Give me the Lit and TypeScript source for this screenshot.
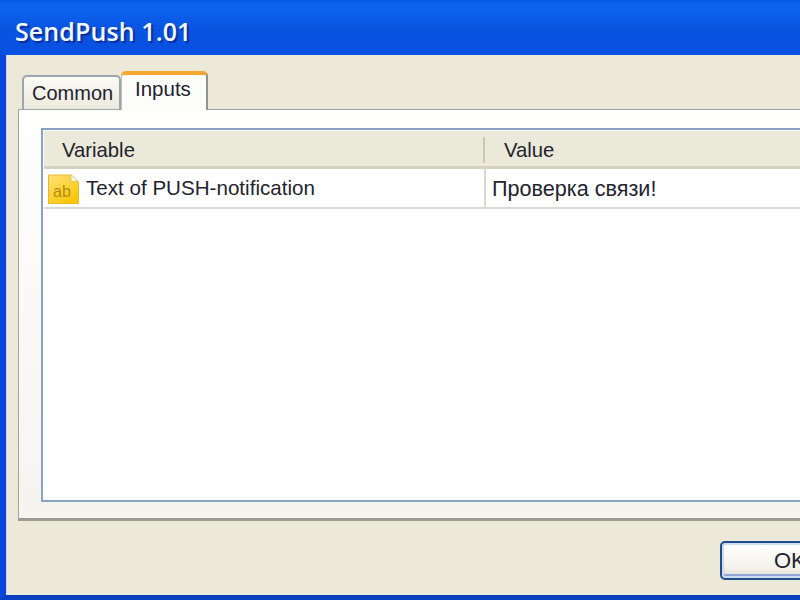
import { LitElement, html, css } from "lit";
import { customElement } from "lit/decorators.js";

@customElement("app-root")
export class AppRoot extends LitElement {
  static styles = css`
    :host { display: block; width: 800px; height: 600px; overflow: hidden; font-family: "Liberation Sans", Arial, sans-serif; color: #23232e; }
    .window { width: 900px; height: 600px; display: flex; flex-direction: column; box-sizing: border-box;
      background: #0b50dc; border-left: 6px solid #0a46d8; border-bottom: 5px solid #0a3fc0; border-top-left-radius: 10px; }
    .title { height: 55px; flex: none; box-sizing: border-box; margin-left: -6px; padding: 13px 0 0 15px; font-size: 25px; line-height: 36px; font-family: "Open Sans", sans-serif; font-weight: 600; color: #f4f8ff; letter-spacing: 0.1px;
      text-shadow: 2px 2px 1px #0a2f9c; background: linear-gradient(#0a5ae6 0, #0c66f0 12%, #0a54e2 50%, #0750e0 100%); }
    .body { flex: 1; background: #ece9d8; border-left: 1px solid #c9d4ec; box-sizing: border-box; padding: 15px 0 0 11px; display: flex; flex-direction: column; }
    .tabs { display: flex; align-items: flex-end; height: 39px; flex: none; padding-left: 4px; position: relative; z-index: 1; }
    .tab { box-sizing: border-box; font-size: 21px; line-height: 28px; }
    .common { width: 99px; height: 34px; padding: 2px 0 0 8px; font-size: 20px; background: linear-gradient(#fbfaf5, #ece9dc); border: 2px solid #9aa7b0; border-bottom: none; border-radius: 5px 5px 0 0; }
    .inputs { width: 87px; height: 39px; padding: 0 0 0 13px; font-size: 20.5px; background: #fdfdfb; border-top: 4px solid #f5a62e; border-left: 1px solid #c4c0ae; border-right: 2px solid #8f948f; border-radius: 5px 5px 0 0; margin-bottom: -1px; }
    .panel { width: 860px; height: 412px; flex: none; box-sizing: border-box; padding: 18px 0 0 22px; background: linear-gradient(#fefefd 0, #f5f4ef 100%); border: 1px solid #9aa5a8; border-bottom: 3px solid #9c9c94; border-right: none; }
    .list { height: 374px; box-sizing: border-box; width: 820px; background: #fff; border: 2px solid #8aa2c2; padding: 1px 0 0 1px; }
    .head { display: flex; height: 38px; box-sizing: border-box; background: #ebe9da; border-bottom: 3px solid #d4d1c0; font-size: 20.3px; line-height: 38px; }
    .hvar { width: 441px; box-sizing: border-box; padding-left: 18px; position: relative; }
    .hvar::after { content: ""; position: absolute; right: 0; top: 6px; height: 26px; width: 2px; background: #c9c6b6; }
    .hval { padding-left: 19px; }
    .row { display: flex; height: 40px; box-sizing: border-box; border-bottom: 2px solid #d8d8d6; font-size: 20.6px; line-height: 40px; }
    .cvar { width: 441px; box-sizing: border-box; display: flex; align-items: center; padding-left: 4px; gap: 7px; }
    .cval { box-sizing: border-box; padding-left: 6px; border-left: 2px solid #d8d8d6; margin-left: -1px; font-size: 21.6px; }
    .footer { flex: 1; display: flex; justify-content: flex-start; padding: 20px 0 0 702px; box-sizing: border-box; }
    .btn { width: 120px; height: 39px; box-sizing: border-box; border: 2px solid #1c4f8c; border-radius: 5px; background: linear-gradient(#fff, #f3f2ea 70%, #dcdacb); box-shadow: inset 0 0 0 2px #cfdcef, inset 0 -2px 0 2px #8fa6d6; font: inherit; font-size: 22px; color: #23232e; padding: 0 0 0 52px; text-align: left; }
  `;

  render() {
    return html`
      <div class="window">
        <div class="title">SendPush 1.01</div>
        <div class="body">
          <div class="tabs">
            <div class="tab common">Common</div>
            <div class="tab inputs">Inputs</div>
          </div>
          <div class="panel">
            <div class="list">
              <div class="head">
                <div class="hvar">Variable</div>
                <div class="hval">Value</div>
              </div>
              <div class="row">
                <div class="cvar">
                  <svg width="31" height="33" viewBox="0 0 31 33">
                    <defs>
                      <linearGradient id="g" x1="0" y1="0" x2="0.6" y2="1">
                        <stop offset="0" stop-color="#ffe27a" />
                        <stop offset="1" stop-color="#fac70a" />
                      </linearGradient>
                    </defs>
                    <path d="M0.5 3 H23 L30.5 10 V31.5 H0.5 Z" fill="url(#g)" stroke="#e6b830" />
                    <path d="M23 2.5 L30 9.5 H23 Z" fill="#fffdf0" stroke="#e0b840" stroke-width="0.8" />
                    <text x="5" y="25" font-size="16" font-family="Liberation Sans, sans-serif" fill="#b28c10">ab</text>
                  </svg>
                  <span>Text of PUSH-notification</span>
                </div>
                <div class="cval">Проверка связи!</div>
              </div>
            </div>
          </div>
          <div class="footer"><button class="btn">OK</button></div>
        </div>
      </div>
    `;
  }
}
